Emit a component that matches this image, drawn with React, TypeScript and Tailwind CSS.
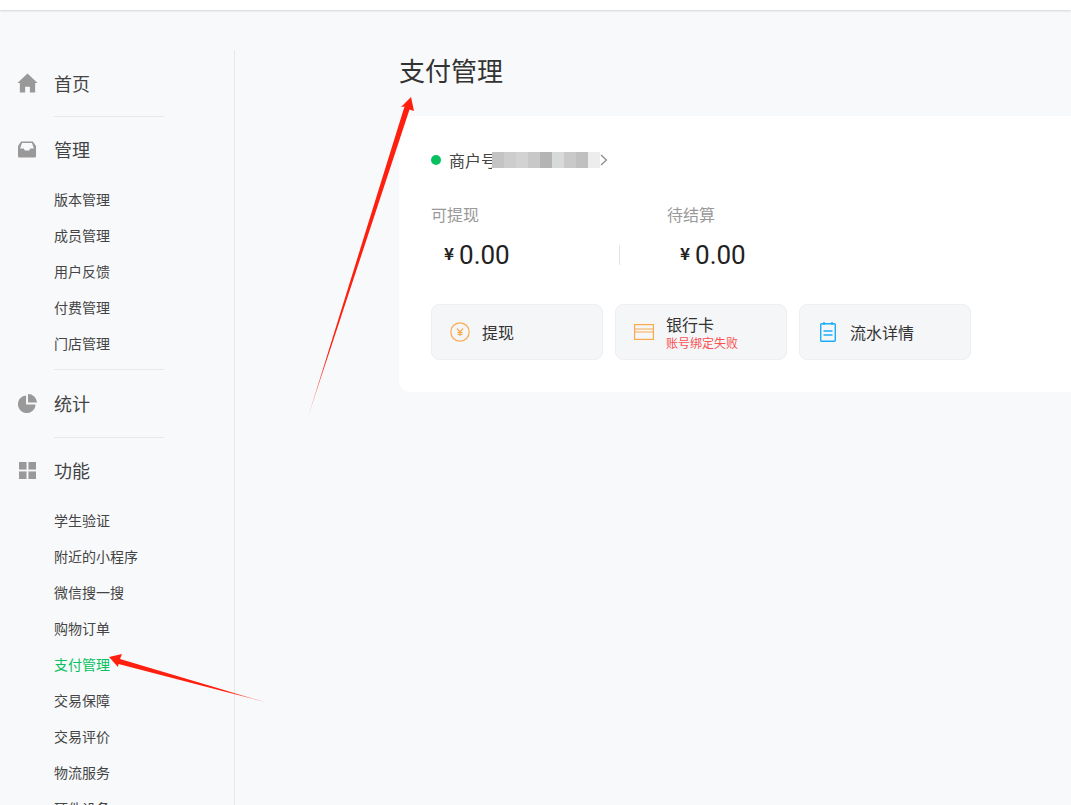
import React from 'react';

const font = { fontFamily: '"Noto Sans CJK SC", sans-serif' };

const HomeIcon = () => (
    <svg width="21" height="20" viewBox="0 0 22 20" fill="#999"><path d="M11 0 21.500 10H19V20H13.500V14H8.500V20H3V10H.5Z" /></svg>
);
const InboxIcon = () => (
    <svg width="18" height="17" viewBox="0 0 20 18" fill="#999">
        <path fillRule="evenodd" d="M3.500 0H16.500L20 5V16.500A1.500 1.500 0 0 1 18.500 18H1.500A1.500 1.500 0 0 1 0 16.500V5ZM4.500 1.800 2.300 8H6.500L7.500 10H12.500L13.500 8H17.700L15.500 1.800Z" />
    </svg>
);
const PieIcon = () => (
    <svg width="19" height="19" viewBox="0 0 20 20" fill="#999">
        <path d="M8.500 1.500V11H18.500A9.300 9.300 0 1 1 8.500 1.500Z" />
        <path d="M10.500 0A9.500 9.500 0 0 1 20 9H10.500Z" />
    </svg>
);
const GridIcon = () => (
    <svg width="17" height="17" viewBox="0 0 18 18" fill="#999">
        <rect width="8" height="8" />
        <rect x="10" width="8" height="8" />
        <rect y="10" width="8" height="8" />
        <rect x="10" y="10" width="8" height="8" />
    </svg>
);

const TopItem = ({ icon, label }: { icon: React.ReactNode; label: string }) => (
    <div className="flex h-[50px] items-center">
        <div className="flex w-[54px] justify-center">{icon}</div>
        <span className="text-[18px] text-[#444]">{label}</span>
    </div>
);

const SubItem = ({ label, active }: { label: string; active?: boolean }) => (
    <div className={`flex h-9 items-center pl-[54px] text-sm ${active ? 'text-[#07c160]' : 'text-[#444]'}`}>{label}</div>
);

const Divider = () => <div className="ml-[54px] h-px w-[110px] bg-[#e7e8ea]" />;

const Sidebar = () => (
    <aside className="mt-[50px] h-[755px] w-[235px] shrink-0 overflow-hidden border-r border-[#e7e8ea] pt-[8px]">
        <TopItem icon={<HomeIcon />} label="首页" />
        <div className="mb-[7px] mt-[8px]"><Divider /></div>
        <TopItem icon={<InboxIcon />} label="管理" />
        <div className="mt-[7px]">
            {['版本管理', '成员管理', '用户反馈', '付费管理', '门店管理'].map((item) => (
                <SubItem key={item} label={item} />
            ))}
        </div>
        <div className="mb-2 mt-2"><Divider /></div>
        <TopItem icon={<PieIcon />} label="统计" />
        <div className="mb-[7px] mt-[9px]"><Divider /></div>
        <TopItem icon={<GridIcon />} label="功能" />
        <div className="mt-[7px]">
            {['学生验证', '附近的小程序', '微信搜一搜', '购物订单'].map((item) => (
                <SubItem key={item} label={item} />
            ))}
            <SubItem label="支付管理" active />
            {['交易保障', '交易评价', '物流服务', '硬件设备'].map((item) => (
                <SubItem key={item} label={item} />
            ))}
        </div>
    </aside>
);

const Stat = ({ label, className }: { label: string; className: string }) => (
    <div className={className}>
        <div className="text-base leading-[24px] text-[#999]">{label}</div>
        <div className="mt-[13px] flex items-center pl-[13px] text-[#222]">
            <span className="mr-[5px] -translate-y-[2px] text-[17px] leading-[32px] font-semibold">¥</span>
            <span className="text-[26px] leading-[32px] font-[450]" style={{ fontFamily: 'Roboto, sans-serif' }}>0.00</span>
        </div>
    </div>
);

const ActionCard = ({ children, inset = 'pl-[18px]' }: { children: React.ReactNode; inset?: string }) => (
    <div className={`flex h-14 w-[172px] items-center rounded-lg border border-[#eeeff1] bg-[#f5f6f8] ${inset}`}>{children}</div>
);

const mosaic = ['#c4c4c4', '#cdcdcd', '#d2d2d2', '#c8c8c8', '#b4b4b4', '#d8dad9', '#c9c9c9', '#bfc0bf', '#ededed'];

export default function App() {
    return (
        <div className="relative flex h-screen flex-col overflow-hidden bg-[#f8f9fb]" style={font}>
            <div className="h-[10px] shrink-0 bg-white shadow-[0_1px_2px_rgba(0,0,0,0.15)]" />
            <div className="-mt-[10px] flex min-h-0 flex-1">
                <Sidebar />
                <main className="min-w-0 flex-1 pl-[164px]">
                    <h1 className="mt-[50px] h-[66px] text-[26px] leading-[40px] text-[#333]">支付管理</h1>
                    <section className="-mr-4 h-[276px] rounded-l-xl bg-white pl-8 pt-8">
                        <div className="flex h-6 items-center text-base text-[#444]">
                            <span className="mr-2 h-[10px] w-[10px] rounded-full bg-[#07c160]" />
                            <span className="w-[43px] overflow-hidden whitespace-nowrap">商户号</span>
                            <div className="flex h-4">
                                {mosaic.map((color) => (
                                    <span key={color} className="h-4 w-3" style={{ backgroundColor: color }} />
                                ))}
                            </div>
                            <svg width="8" height="12" viewBox="0 0 8 12" fill="none" stroke="#888" strokeWidth="1.200"><path d="M1 1 6.500 6 1 11" /></svg>
                        </div>
                        <div className="mt-[30px] flex items-end">
                            <Stat label="可提现" className="w-[188px]" />
                            <div className="mb-[6px] h-5 w-px bg-[#e5e5e5]" />
                            <Stat label="待结算" className="pl-[47px]" />
                        </div>
                        <div className="mt-[33px] flex gap-3">
                            <ActionCard>
                                <svg width="20" height="20" viewBox="0 0 20 20" fill="none" stroke="#fba94f" strokeWidth="1.200">
                                    <circle cx="10" cy="10" r="9.200" />
                                    <path d="M7 6.500 10 10 13 6.500M10 10V14M7.500 10.500H12.500M7.500 12.300H12.500" />
                                </svg>
                                <span className="ml-[12px] text-base text-[#333]">提现</span>
                            </ActionCard>
                            <ActionCard>
                                <svg width="20" height="16" viewBox="0 0 20 16" fill="none" stroke="#fba94f" strokeWidth="1.200">
                                    <rect x=".6" y=".6" width="18.800" height="14.800" />
                                    <path d="M.6 5H19.400M.6 8H19.400" />
                                </svg>
                                <div className="ml-3 flex flex-col">
                                    <span className="text-base leading-[20px] text-[#333]">银行卡</span>
                                    <span className="mt-[1px] text-xs leading-[15px] text-[#fa5151]">账号绑定失败</span>
                                </div>
                            </ActionCard>
                            <ActionCard inset="pl-5">
                                <svg width="16" height="20" viewBox="0 0 16 20" fill="none" stroke="#1cacfa" strokeWidth="1.400">
                                    <rect x=".7" y="1.700" width="14.600" height="17.600" rx="1" />
                                    <path d="M4 0V3M12 0V3M3.500 9H12.500M3.500 13H12.500" />
                                </svg>
                                <span className="ml-[14px] text-base text-[#333]">流水详情</span>
                            </ActionCard>
                        </div>
                    </section>
                </main>
            </div>
            <svg className="pointer-events-none absolute left-0 top-0" width="1071" height="805" viewBox="0 0 1071 805">
                <defs>
                    <linearGradient id="arrowUp" gradientUnits="userSpaceOnUse" x1="308" y1="418" x2="330" y2="350">
                        <stop offset="0" stopColor="#ff1f0f" stopOpacity="0.4" />
                        <stop offset="1" stopColor="#ff1f0f" />
                    </linearGradient>
                    <linearGradient id="arrowLeft" gradientUnits="userSpaceOnUse" x1="266" y1="702" x2="225" y2="690">
                        <stop offset="0" stopColor="#ff1f0f" stopOpacity="0.4" />
                        <stop offset="1" stopColor="#ff1f0f" />
                    </linearGradient>
                </defs>
                <path fill="url(#arrowUp)" d="M307.500 418.500 404.500 106.500 401 107 411 97 414 111 409.500 109.500Z" />
                <path fill="url(#arrowLeft)" d="M266.500 702.500 120 659 122 654 109 657 118 667 118.500 664Z" />
            </svg>
        </div>
    );
}
